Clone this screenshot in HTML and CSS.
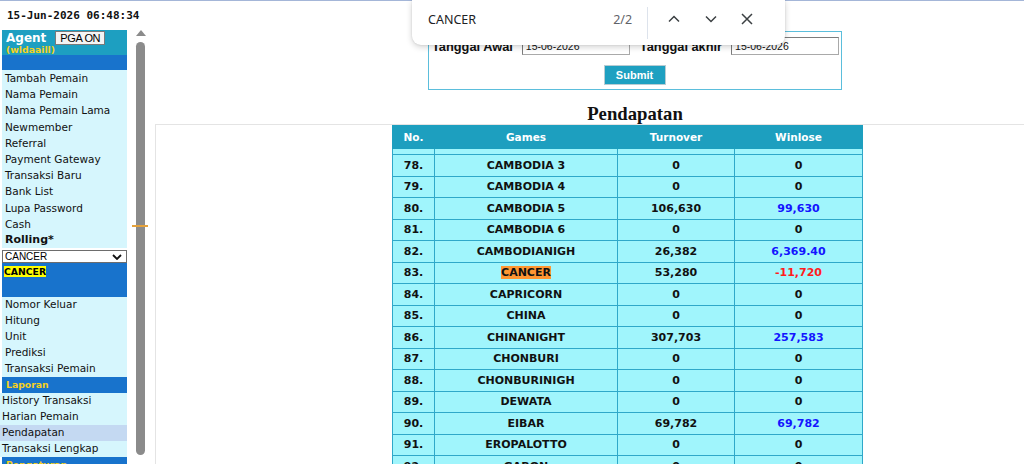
FILE: index.html
```html
<!DOCTYPE html>
<html lang="id">

<head>
  <meta charset="UTF-8">
  <meta name="viewport" content="width=device-width, initial-scale=1.0">
  <title>Pendapatan</title>
  <link rel="stylesheet" href="styles.css">
</head>

<body>
  <div class="page">
    <div class="left-frame">
      <div class="side">
        <div class="clock">15-Jun-2026 06:48:34</div>

        <div class="agent">
          <div class="agent-top">
            <b class="agent-name">Agent</b>
            <span class="pga">PGA ON</span>
          </div>
          <div class="agent-id">(wldaaill)</div>
        </div>
        <div class="blue-bar"></div>

        <ul class="links">
          <li>Tambah Pemain</li>
          <li>Nama Pemain</li>
          <li>Nama Pemain Lama</li>
          <li>Newmember</li>
          <li>Referral</li>
          <li>Payment Gateway</li>
          <li>Transaksi Baru</li>
          <li>Bank List</li>
          <li>Lupa Password</li>
          <li>Cash</li>
          <li class="bold">Rolling*</li>
        </ul>

        <div class="select-box">
          <select>
            <option>CANCER</option>
          </select>
          <svg class="select-arrow" width="10" height="6" viewBox="0 0 10 6">
            <polyline points="1,1 5,5 9,1" fill="none" stroke="#111" stroke-width="1.8" />
          </svg>
        </div>
        <div class="game-box"><span class="mark">CANCER</span></div>

        <ul class="links tight">
          <li>Nomor Keluar</li>
          <li>Hitung</li>
          <li>Unit</li>
          <li>Prediksi</li>
          <li>Transaksi Pemain</li>
        </ul>

        <div class="section">Laporan</div>
        <ul class="links tight flat">
          <li>History Transaksi</li>
          <li>Harian Pemain</li>
          <li class="active">Pendapatan</li>
          <li>Transaksi Lengkap</li>
        </ul>
        <div class="section">Pengaturan</div>
      </div>

      <div class="scroll">
        <div class="scroll-up"></div>
        <div class="scroll-thumb"></div>
        <div class="scroll-tick"></div>
      </div>
    </div>

    <div class="main">
      <form class="filter">
        <div class="filter-row">
          <label>Tanggal Awal</label>
          <input type="text" value="15-06-2026">
          <label>Tanggal akhir</label>
          <input type="text" value="15-06-2026">
        </div>
        <div class="filter-submit">
          <input type="submit" value="Submit">
        </div>
      </form>

      <h3 class="title">Pendapatan</h3>

      <div class="report">
        <table class="report-table">
          <colgroup>
            <col style="width: 42px">
            <col style="width: 183px">
            <col style="width: 117px">
            <col style="width: 128px">
          </colgroup>
          <thead>
            <tr>
              <th>No.</th>
              <th>Games</th>
              <th>Turnover</th>
              <th>Winlose</th>
            </tr>
          </thead>
          <tbody>
            <tr class="spacer"><td></td><td></td><td></td><td></td></tr>
            <tr><td>78.</td><td>CAMBODIA 3</td><td>0</td><td>0</td></tr>
            <tr><td>79.</td><td>CAMBODIA 4</td><td>0</td><td>0</td></tr>
            <tr><td>80.</td><td>CAMBODIA 5</td><td>106,630</td><td class="plus">99,630</td></tr>
            <tr><td>81.</td><td>CAMBODIA 6</td><td>0</td><td>0</td></tr>
            <tr><td>82.</td><td>CAMBODIANIGH</td><td>26,382</td><td class="plus">6,369.40</td></tr>
            <tr><td>83.</td><td><span class="found">CANCER</span></td><td>53,280</td><td class="minus">-11,720</td></tr>
            <tr><td>84.</td><td>CAPRICORN</td><td>0</td><td>0</td></tr>
            <tr><td>85.</td><td>CHINA</td><td>0</td><td>0</td></tr>
            <tr><td>86.</td><td>CHINANIGHT</td><td>307,703</td><td class="plus">257,583</td></tr>
            <tr><td>87.</td><td>CHONBURI</td><td>0</td><td>0</td></tr>
            <tr><td>88.</td><td>CHONBURINIGH</td><td>0</td><td>0</td></tr>
            <tr><td>89.</td><td>DEWATA</td><td>0</td><td>0</td></tr>
            <tr><td>90.</td><td>EIBAR</td><td>69,782</td><td class="plus">69,782</td></tr>
            <tr><td>91.</td><td>EROPALOTTO</td><td>0</td><td>0</td></tr>
            <tr><td>92.</td><td>GABON</td><td>0</td><td>0</td></tr>
          </tbody>
        </table>
      </div>
    </div>
  </div>

  <div class="find">
    <span class="find-query">CANCER</span>
    <span class="find-count">2/2</span>
    <span class="find-divider"></span>
    <span class="find-btn">
      <svg width="12" height="12" viewBox="0 0 12 12">
        <polyline points="1,8.5 6,3.5 11,8.5" fill="none" stroke="#3c4043" stroke-width="1.5" />
      </svg>
    </span>
    <span class="find-btn">
      <svg width="12" height="12" viewBox="0 0 12 12">
        <polyline points="1,3.5 6,8.5 11,3.5" fill="none" stroke="#3c4043" stroke-width="1.5" />
      </svg>
    </span>
    <span class="find-btn">
      <svg width="12" height="12" viewBox="0 0 12 12">
        <path d="M1 1 L11 11 M11 1 L1 11" fill="none" stroke="#3c4043" stroke-width="1.5" />
      </svg>
    </span>
  </div>
</body>

</html>
```

FILE: styles.css
```css
html,
body {
  margin: 0;
  padding: 0;
  height: 100%;
  overflow: hidden;
}

body {
  border-top: 1px solid #a4b6d8;
  background-color: #fff;
  font-family: "DejaVu Sans", Verdana, sans-serif;
  color: #111;
}

.page {
  display: flex;
  height: 463px;
}

/* left frame */

.left-frame {
  width: 150px;
  flex: none;
  display: flex;
}

.side {
  width: 127px;
  flex: none;
}

.clock {
  height: 29px;
  box-sizing: border-box;
  padding: 8px 0 0 7px;
  font: bold 11px/13px "DejaVu Sans Mono", monospace;
  white-space: nowrap;
}

.agent {
  margin-left: 2px;
  height: 25px;
  box-sizing: border-box;
  padding: 1px 0 0 4px;
  background-color: #1d9fc1;
}

.agent-top {
  display: flex;
  align-items: flex-start;
  gap: 9px;
}

.agent-name {
  color: #fff;
  font-size: 12px;
  line-height: 14px;
}

.pga {
  height: 14px;
  box-sizing: border-box;
  padding: 0 4px;
  border: 1px solid #7a7a7a;
  background-color: #f4f4f4;
  color: #000;
  font: 11px/12px "Liberation Sans", Arial, sans-serif;
  letter-spacing: -0.4px;
}

.agent-id {
  color: #f5d020;
  font-size: 9.3px;
  font-weight: bold;
  line-height: 10px;
}

.blue-bar {
  margin-left: 2px;
  height: 15px;
  background-color: #1873cc;
}

.links {
  list-style: none;
  margin: 0 0 0 2px;
  padding: 0 0 0 3px;
  background-color: #d6f6fd;
  font-size: 10.5px;
  line-height: 16.2px;
}

.links li {
  white-space: nowrap;
}

.links.tight li {
  line-height: 14px;
  padding-bottom: 2px;
}

.links .bold {
  font-weight: bold;
  font-size: 11px;
}

.links.flat {
  margin-left: 0;
  padding-left: 0;
}

.links.flat li {
  padding-left: 2px;
}

.links.flat .active {
  background-color: #c4d9f2;
}

.select-box {
  position: relative;
  margin: 2px 0 0 2px;
  height: 13px;
}

.select-box select {
  appearance: none;
  display: block;
  width: 125px;
  height: 13px;
  margin: 0;
  padding: 0 0 0 2px;
  border: 1px solid #6d6d6d;
  border-radius: 0;
  background-color: #fff;
  color: #000;
  font: 10px/11px "Liberation Sans", Arial, sans-serif;
}

.select-arrow {
  position: absolute;
  right: 5px;
  top: 4px;
}

.game-box {
  margin-left: 2px;
  height: 34px;
  box-sizing: border-box;
  padding: 3px 0 0 2px;
  background-color: #1873cc;
  font-size: 9.3px;
  line-height: 11px;
}

.mark {
  background-color: #ffff00;
  color: #000;
  font-weight: bold;
}

.section {
  margin-left: 2px;
  height: 16px;
  padding-left: 4px;
  background-color: #1873cc;
  color: #f5d020;
  font-size: 9.3px;
  font-weight: bold;
  line-height: 16px;
}

.scroll {
  position: relative;
  flex: 1;
  padding: 29px 0 0 4px;
  display: flex;
  flex-direction: column;
  align-items: center;
}

.scroll-up {
  width: 0;
  height: 0;
  border-left: 5px solid transparent;
  border-right: 5px solid transparent;
  border-bottom: 6px solid #8b8b8b;
}

.scroll-thumb {
  margin-top: 6px;
  width: 9px;
  height: 413px;
  border-radius: 5px;
  background-color: #8b8b8b;
}

.scroll-tick {
  position: absolute;
  left: 5px;
  top: 224px;
  width: 16px;
  height: 2px;
  background-color: #e5a23c;
}

/* right frame */

.main {
  width: 970px;
  flex: none;
}

.filter {
  width: 414px;
  box-sizing: border-box;
  margin: 30px auto 0;
  padding: 5px 4px 4px 3px;
  border: 1px solid #5bbedc;
}

.filter-row {
  display: flex;
  align-items: center;
  height: 18px;
}

.filter-row label {
  font: bold 12.8px "Liberation Sans", Arial, sans-serif;
  white-space: nowrap;
}

.filter-row input {
  width: 108px;
  height: 18px;
  box-sizing: border-box;
  margin: 0 0 0 9px;
  padding: 0 3px;
  border: 1px solid #a9a9a9;
  border-top-color: #7c7c7c;
  border-left-color: #7c7c7c;
  color: #111;
  font: 10.5px "Liberation Sans", Arial, sans-serif;
}

.filter-row input + label {
  margin-left: 10px;
}

.filter-submit {
  margin-top: 10px;
  display: flex;
  justify-content: center;
}

.filter-submit input {
  width: 62px;
  height: 20px;
  margin: 0;
  border: 1px solid #b8ccd3;
  background-color: #1ea0c1;
  color: #fff;
  font: bold 11px "Liberation Sans", Arial, sans-serif;
  padding: 0;
}

.title {
  margin: 13px 0 0;
  text-align: center;
  font: bold 18.72px/21px "Liberation Serif", "Times New Roman", serif;
}

.report {
  margin: 0 20px 0 5px;
  height: 400px;
  border: 1px solid #e4e4e4;
  border-bottom: none;
}

.report-table {
  margin: 0 auto;
  width: 470px;
  table-layout: fixed;
  border-collapse: collapse;
  text-align: center;
  font-weight: bold;
  font-size: 11px;
}

.report-table th {
  height: 22px;
  padding: 0;
  border: 1px solid #1d9fbf;
  background-color: #1d9fbf;
  color: #fff;
  font-size: 10.5px;
}

.report-table td {
  height: 20.5px;
  padding: 0;
  border: 1px solid #2fa8c9;
  background-color: #a0f5fc;
  white-space: nowrap;
}

.report-table .spacer td {
  height: 5px;
}

.report-table .plus {
  color: #1414ff;
}

.report-table .minus {
  color: #ff1c1c;
}

.found {
  background-color: #ff9632;
}

/* find in page bar */

.find {
  position: absolute;
  left: 412px;
  top: 0;
  width: 373px;
  height: 45px;
  box-sizing: border-box;
  padding: 0 20px 7px 16px;
  display: flex;
  align-items: center;
  background-color: #fff;
  border-radius: 0 0 9px 9px;
  box-shadow: 0 2px 6px rgba(0, 0, 0, 0.18), 0 0 2px rgba(0, 0, 0, 0.12);
  font: 12.5px "Noto Sans", "Open Sans", sans-serif;
  color: #202124;
}

.find-query {
  flex: 1;
}

.find-count {
  color: #5f6368;
  margin-right: 15px;
}

.find-divider {
  width: 1px;
  height: 32px;
  margin-top: 7px;
  margin-right: 8px;
  background-color: #dde3ec;
}

.find-btn {
  width: 36.3px;
  display: flex;
  justify-content: center;
}
```
